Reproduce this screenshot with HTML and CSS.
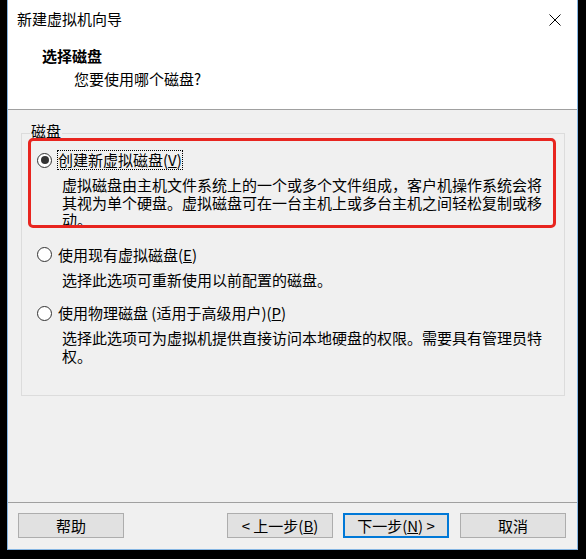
FILE: index.html
```html
<!DOCTYPE html>
<html lang="zh-CN">
<head>
<meta charset="utf-8">
<title>新建虚拟机向导</title>
<link rel="stylesheet" href="styles.css">
</head>
<body>
<div class="window">
  <div class="titlebar">
    <span class="title">新建虚拟机向导</span>
    <span class="close">
      <svg width="12" height="12" viewBox="0 0 12 12"><path d="M0.5 0.5 L11.5 11.5 M11.5 0.5 L0.5 11.5" stroke="#000" stroke-width="1" fill="none"/></svg>
    </span>
  </div>
  <div class="header">
    <div class="heading">选择磁盘</div>
    <div class="subheading">您要使用哪个磁盘?</div>
  </div>
  <div class="content">
    <fieldset class="group">
      <legend class="legend">磁盘</legend>
      <div class="option first">
        <div class="row">
          <span class="radio checked"></span>
          <span class="label focus">创建新虚拟磁盘(<u>V</u>)</span>
        </div>
        <div class="desc">虚拟磁盘由主机文件系统上的一个或多个文件组成，客户机操作系统会将<br>其视为单个硬盘。虚拟磁盘可在一台主机上或多台主机之间轻松复制或移<br>动。</div>
        <div class="highlight"></div>
      </div>
      <div class="option">
        <div class="row">
          <span class="radio"></span>
          <span class="label">使用现有虚拟磁盘(<u>E</u>)</span>
        </div>
        <div class="desc">选择此选项可重新使用以前配置的磁盘。</div>
      </div>
      <div class="option third">
        <div class="row">
          <span class="radio"></span>
          <span class="label">使用物理磁盘 (适用于高级用户)(<u>P</u>)</span>
        </div>
        <div class="desc">选择此选项可为虚拟机提供直接访问本地硬盘的权限。需要具有管理员特<br>权。</div>
      </div>
    </fieldset>
  </div>
  <div class="footer">
    <button class="btn">帮助</button>
    <span class="spacer"></span>
    <button class="btn">&lt; 上一步(<u>B</u>)</button>
    <button class="btn default">下一步(<u>N</u>) &gt;</button>
    <button class="btn cancel">取消</button>
  </div>
</div>
</body>
</html>
```
FILE: styles.css
```css
html, body {
  margin: 0;
  padding: 0;
  background: #000;
  width: 586px;
  height: 559px;
  overflow: hidden;
}
body {
  font-family: "Noto Sans CJK SC", "Microsoft YaHei", sans-serif;
  font-size: 15px;
  color: #000;
}
.window {
  margin-left: 7px;
  width: 571px;
  height: 550px;
  box-sizing: border-box;
  border: 1px solid #86b6e3;
  border-top: none;
  background: #f0f0f0;
  display: flex;
  flex-direction: column;
}
.titlebar {
  height: 38px;
  background: #fff;
  display: flex;
  align-items: center;
  padding-left: 9px;
  padding-right: 16px;
}
.title {
  flex: 1;
  line-height: 20px;
}
.close {
  display: flex;
  width: 12px;
  height: 12px;
  margin-top: 2px;
}
.header {
  height: 72px;
  background: #fff;
  border-bottom: 1px solid #a0a0a0;
  box-sizing: border-box;
  padding-top: 8px;
  padding-left: 34px;
}
.heading {
  font-weight: bold;
  line-height: 20px;
}
.subheading {
  line-height: 20px;
  margin-top: 3px;
  padding-left: 32px;
}
.content {
  height: 392px;
  padding-top: 13px;
  box-sizing: border-box;
}
.group {
  margin: 0 12px 0 13px;
  padding: 0 0 31px 0;
  border: 1px solid #dcdcdc;
  min-width: 0;
}
.legend {
  margin-left: 8px;
  padding: 0 1px;
  line-height: 16px;
  padding-bottom: 4px;
}
.option {
  position: relative;
  margin-top: 16px;
}
.option.first {
  margin-top: 7px;
}
.option.third {
  margin-top: 15px;
}
.row {
  display: flex;
  align-items: center;
  height: 20px;
  padding-left: 15px;
}
.radio {
  width: 15px;
  height: 15px;
  box-sizing: border-box;
  border: 1px solid #333;
  border-radius: 50%;
  background: #fff;
  margin-right: 5px;
  display: flex;
  align-items: center;
  justify-content: center;
}
.radio.checked::after {
  content: "";
  width: 8px;
  height: 8px;
  border-radius: 50%;
  background: #333;
}
.label {
  border: 1px dotted transparent;
  line-height: 18px;
  white-space: nowrap;
}
.label.focus {
  border-color: #000;
}
.desc {
  margin-top: 6px;
  padding-left: 40px;
  line-height: 17.5px;
  white-space: nowrap;
}
.highlight {
  position: absolute;
  left: 6px;
  right: 8px;
  top: -12px;
  height: 90px;
  box-sizing: border-box;
  border: 3px solid #e8251f;
  border-radius: 5px;
  pointer-events: none;
}
.footer {
  flex: 1;
  border-top: 1px solid #a0a0a0;
  display: flex;
  align-items: flex-start;
  padding: 10px 11px 0 10px;
}
.spacer {
  flex: 1;
}
.btn {
  width: 106px;
  height: 25px;
  box-sizing: border-box;
  border: 1px solid #adadad;
  background: #e1e1e1;
  font-family: inherit;
  font-size: 15px;
  color: #000;
  padding: 0;
  line-height: 20px;
}
.btn.default {
  border: 2px solid #0078d7;
  margin-left: 10px;
}
.btn.cancel {
  margin-left: 11px;
}
```
